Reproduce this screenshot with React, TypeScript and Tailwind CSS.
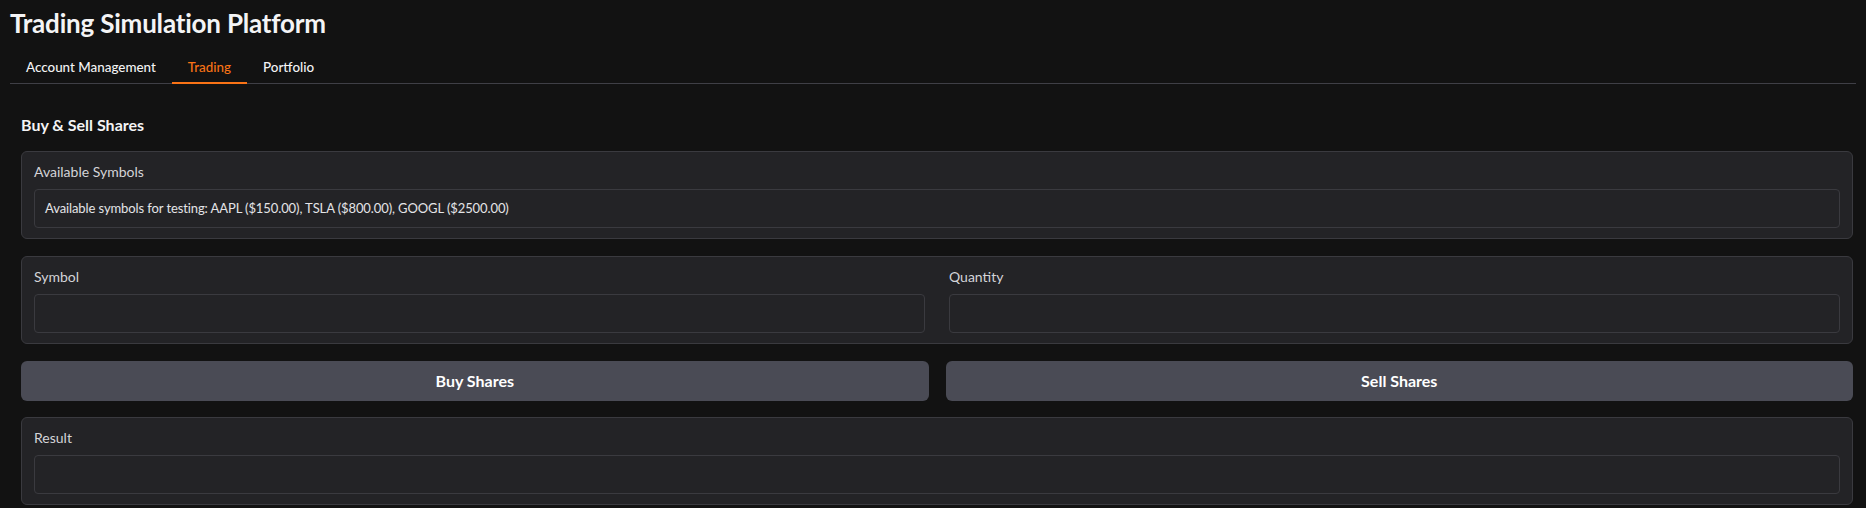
import { useState } from 'react';

const tabs = ['Account Management', 'Trading', 'Portfolio'];

const Field = ({ label, children }: { label: string; children?: React.ReactNode }) => (
  <div className="flex flex-col">
    <span className="mb-[7px] text-[14px] leading-[20px] text-[#d4d4d8]">{label}</span>
    <div className="flex h-[39px] items-center rounded-[4px] border border-[#3a3a3f] bg-[#232326] px-[10px] text-[13px] tracking-[-0.1px] text-[#e4e4e7]">
      {children}
    </div>
  </div>
);

const App = () => {
  const [activeTab, setActiveTab] = useState('Trading');

  return (
    <div className="min-h-screen bg-[#121212] px-[10px] font-['Lato',sans-serif] text-[#f4f4f5]">
      <h1 className="pt-[7px] text-[26px] font-bold leading-[32px] tracking-[-0.2px]">Trading Simulation Platform</h1>

      <div className="mt-[11px] flex h-[34px] border-b border-[#3f3f46]">
        {tabs.map((tab) => (
          <button
            key={tab}
            onClick={() => setActiveTab(tab)}
            className={
              tab === activeTab
                ? '-mb-px h-[34px] border-b-2 border-[#f97316] px-[16px] pt-[2px] text-[13.4px] font-medium text-[#f97316]'
                : 'h-[33px] px-[16px] pt-[2px] text-[13.4px] font-medium text-[#f4f4f5]'
            }
          >
            {tab}
          </button>
        ))}
      </div>

      <div className="pl-[11px] pr-[3px] pt-[29px]">
        <h2 className="mb-[14px] text-[16px] font-bold leading-[24px]">Buy &amp; Sell Shares</h2>

        <div className="rounded-[6px] border border-[#3a3a3f] bg-[#232326] px-[12px] py-[10px]">
          <Field label="Available Symbols">
            Available symbols for testing: AAPL ($150.00), TSLA ($800.00), GOOGL ($2500.00)
          </Field>
        </div>

        <div className="mt-[17px] grid grid-cols-2 gap-[24px] rounded-[6px] border border-[#3a3a3f] bg-[#232326] px-[12px] py-[10px]">
          <Field label="Symbol" />
          <Field label="Quantity" />
        </div>

        <div className="mt-[17px] grid grid-cols-2 gap-[17px]">
          <button className="h-[40px] rounded-[6px] bg-[#4a4b55] text-[16px] font-bold text-white">Buy Shares</button>
          <button className="h-[40px] rounded-[6px] bg-[#4a4b55] text-[16px] font-bold text-white">Sell Shares</button>
        </div>

        <div className="mt-[16px] rounded-[6px] border border-[#3a3a3f] bg-[#232326] px-[12px] py-[10px]">
          <Field label="Result" />
        </div>
      </div>
    </div>
  );
};

export default App;
